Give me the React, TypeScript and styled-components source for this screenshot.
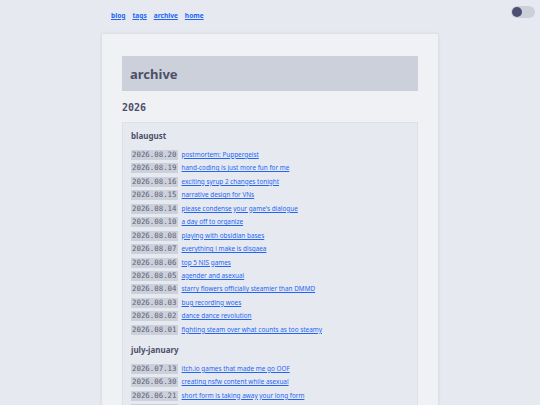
import styled, { createGlobalStyle } from 'styled-components';

const GlobalStyle = createGlobalStyle`
  html, body {
    margin: 0;
    padding: 0;
    background: #e6e9ef;
    font-family: "Noto Sans", "DejaVu Sans", sans-serif;
    color: #4c4f69;
  }
`;

const Page = styled.div`
  position: relative;
  width: 540px;
  height: 405px;
  overflow: hidden;
  display: flex;
  flex-direction: column;
  align-items: center;
`;

const Nav = styled.nav`
  flex-shrink: 0;
  width: 336px;
  display: flex;
  gap: 7px;
  padding: 11px 0 0 9px;
  box-sizing: border-box;
  height: 34px;
`;

const NavLink = styled.a`
  color: #1e66f5;
  font-size: 6.6px;
  font-weight: 700;
  text-decoration: underline;
  line-height: 10px;
`;

const Toggle = styled.div`
  position: absolute;
  top: 6px;
  right: 5px;
  width: 24px;
  height: 12px;
  border-radius: 6px;
  background: #ccd0da;
`;

const Knob = styled.div`
  position: absolute;
  top: 1px;
  left: 1px;
  width: 10px;
  height: 10px;
  border-radius: 50%;
  background: #4c4f72;
`;

const Card = styled.main`
  flex-shrink: 0;
  width: 336px;
  min-height: 371px;
  background: #eff1f5;
  box-shadow: 0 0 3px rgba(76, 79, 105, 0.15);
  padding: 22px 20px 0;
  box-sizing: border-box;
`;

const Header = styled.h1`
  margin: 0;
  height: 35px;
  background: #ccd0da;
  display: flex;
  align-items: center;
  padding-left: 8px;
  font-size: 13px;
  font-weight: 700;
  color: #4c4f69;
`;

const Year = styled.h2`
  margin: 0;
  padding: 10px 0 8px;
  font-family: "DejaVu Sans Mono", monospace;
  font-size: 10px;
  line-height: 13px;
  font-weight: 700;
  color: #4c4f69;
`;

const Box = styled.section`
  background: #e6e9ef;
  border: 1px solid #dce0e8;
  padding: 6px 8px 10px;
`;

const Month = styled.h3`
  margin: 0;
  font-size: 8px;
  font-weight: 700;
  line-height: 14px;
  padding-bottom: 7px;
  color: #4c4f69;
`;

const List = styled.ul`
  list-style: none;
  margin: 0 0 8px;
  padding: 0;
  display: flex;
  flex-direction: column;
  gap: 3.45px;
`;

const Row = styled.li`
  display: flex;
  align-items: center;
  gap: 4px;
  height: 10px;
`;

const DateBadge = styled.span`
  background: #ccd0da;
  font-family: "DejaVu Sans Mono", monospace;
  font-size: 7.4px;
  line-height: 10px;
  padding: 0 1px;
  color: #5c5f77;
`;

const PostLink = styled.a`
  color: #1e66f5;
  font-size: 6.4px;
  text-decoration: underline;
  line-height: 10px;
`;

const groups = [
  {
    name: 'blaugust',
    posts: [
      ['2026.08.20', 'postmortem: Puppergeist'],
      ['2026.08.19', 'hand-coding is just more fun for me'],
      ['2026.08.16', 'exciting syrup 2 changes tonight'],
      ['2026.08.15', 'narrative design for VNs'],
      ['2026.08.14', "please condense your game's dialogue"],
      ['2026.08.10', 'a day off to organize'],
      ['2026.08.08', 'playing with obsidian bases'],
      ['2026.08.07', 'everything i make is disgaea'],
      ['2026.08.06', 'top 5 NIS games'],
      ['2026.08.05', 'agender and asexual'],
      ['2026.08.04', 'starry flowers officially steamier than DMMD'],
      ['2026.08.03', 'bug recording woes'],
      ['2026.08.02', 'dance dance revolution'],
      ['2026.08.01', 'fighting steam over what counts as too steamy'],
    ],
  },
  {
    name: 'july-january',
    posts: [
      ['2026.07.13', 'itch.io games that made me go OOF'],
      ['2026.06.30', 'creating nsfw content while asexual'],
      ['2026.06.21', 'short form is taking away your long form'],
      ['2026.06.12', 'writing games in the margins'],
    ],
  },
];

export default function App() {
  return (
    <>
      <GlobalStyle />
      <Page>
        <Nav>
          <NavLink href="#">blog</NavLink>
          <NavLink href="#">tags</NavLink>
          <NavLink href="#">archive</NavLink>
          <NavLink href="#">home</NavLink>
        </Nav>
        <Toggle>
          <Knob />
        </Toggle>
        <Card>
          <Header>archive</Header>
          <Year>2026</Year>
          <Box>
            {groups.map((g) => (
              <div key={g.name}>
                <Month>{g.name}</Month>
                <List>
                  {g.posts.map(([date, title]) => (
                    <Row key={date}>
                      <DateBadge>{date}</DateBadge>
                      <PostLink href="#">{title}</PostLink>
                    </Row>
                  ))}
                </List>
              </div>
            ))}
          </Box>
        </Card>
      </Page>
    </>
  );
}
